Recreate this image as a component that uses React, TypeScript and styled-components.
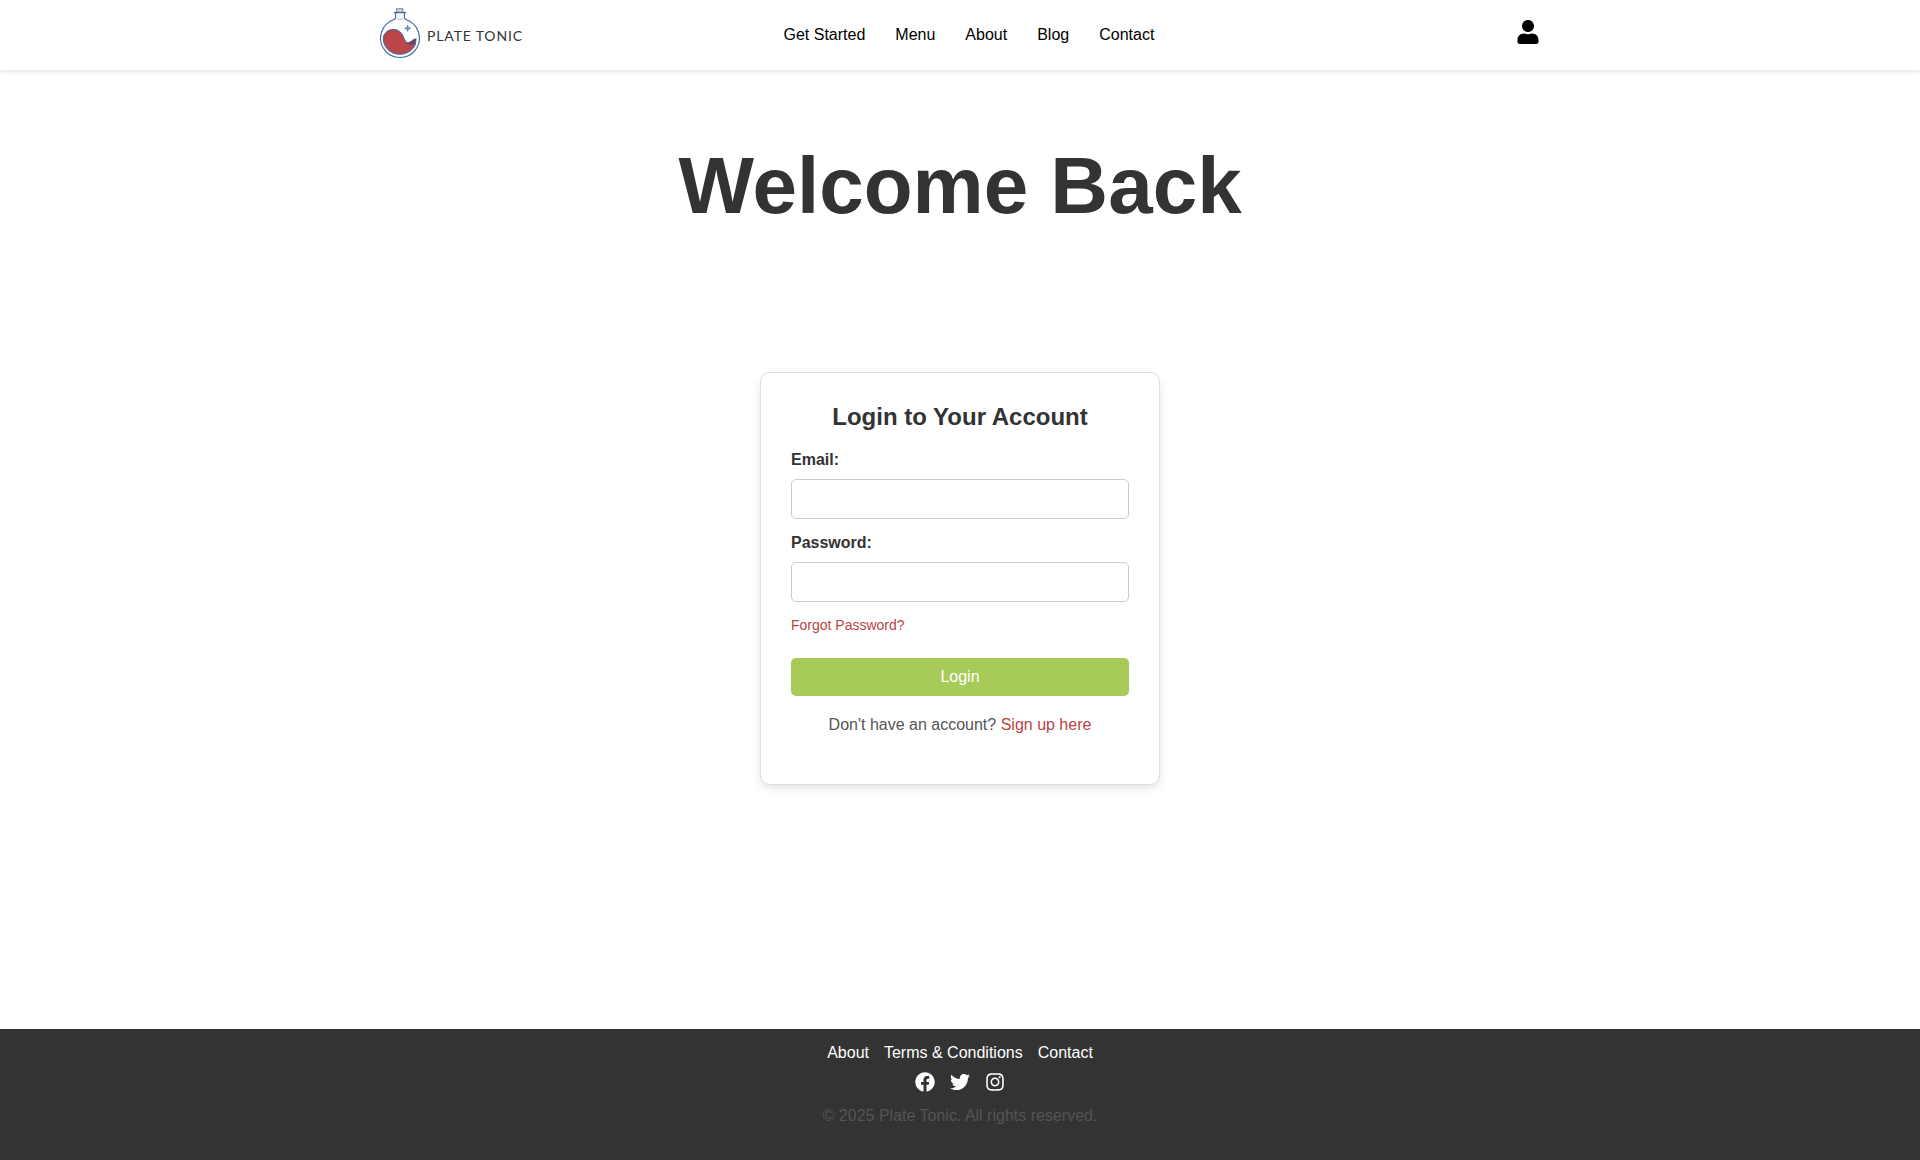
import React from 'react';
import styled, { createGlobalStyle } from 'styled-components';
import { FaUser, FaFacebook, FaTwitter, FaInstagram } from 'react-icons/fa';

const GlobalStyle = createGlobalStyle`
  *, *::before, *::after { box-sizing: border-box; }
  body {
    margin: 0;
    background: #fff;
    color: #333;
    font-family: "Liberation Sans", Arial, sans-serif;
    font-size: 16px;
    line-height: 24px;
  }
  a { text-decoration: none; }
`;

const Page = styled.div`
  display: flex;
  flex-direction: column;
  min-height: 1160px;
`;

const Header = styled.header`
  height: 70px;
  background: #fff;
  box-shadow: 0 2px 5px rgba(0, 0, 0, 0.1);
`;

const HeaderInner = styled.div`
  display: grid;
  grid-template-columns: 403.5px 1fr auto;
  align-items: start;
  width: 1200px;
  height: 100%;
  margin: 0 auto;
  padding: 0 20px;
`;

const Brand = styled.a`
  display: flex;
  color: #333;
`;

const Flask = styled.svg`
  flex: none;
  width: 42px;
  height: 60px;
`;

const BrandName = styled.span`
  margin: 24px 0 0 5px;
  font-family: Lato, sans-serif;
  font-size: 14px;
  line-height: 24px;
  letter-spacing: 0.85px;
  white-space: nowrap;
`;

const Nav = styled.nav`
  display: flex;
  gap: 30px;
  padding-top: 23px;
`;

const NavLink = styled.a`
  color: #000;
`;

const AccountLink = styled.a`
  display: flex;
  margin-top: 20px;
  color: #000;
  font-size: 24px;
`;

const Main = styled.main`
  display: flex;
  flex: 1;
  flex-direction: column;
  align-items: center;
`;

const Title = styled.h1`
  margin: 70px 0 0;
  font-size: 80px;
  font-weight: 700;
  line-height: 92px;
`;

const Card = styled.form`
  width: 400px;
  height: 413px;
  margin-top: 140px;
  padding: 30px;
  background: #fff;
  border: 1px solid #ddd;
  border-radius: 10px;
  box-shadow: 0 4px 8px rgba(0, 0, 0, 0.1);
`;

const CardTitle = styled.h2`
  margin: 0 0 17px;
  font-size: 24px;
  line-height: 28px;
  text-align: center;
`;

const Field = styled.div`
  display: flex;
  flex-direction: column;
  gap: 7px;
  margin-bottom: 12px;
`;

const Label = styled.label`
  font-weight: 700;
`;

const Input = styled.input`
  width: 100%;
  height: 40px;
  padding: 10px;
  background: #fff;
  border: 1px solid #ccc;
  border-radius: 5px;
  font: inherit;
`;

const ForgotLink = styled.a`
  display: block;
  color: #b94445;
  font-size: 14px;
  line-height: 22px;
`;

const SubmitButton = styled.button`
  display: block;
  width: 100%;
  height: 38px;
  margin-top: 22px;
  padding: 0;
  background: #a8ca59;
  border: 0;
  border-radius: 5px;
  color: #fff;
  font: inherit;
`;

const SignUp = styled.p`
  margin: 17px 0 0;
  color: #555;
  text-align: center;
`;

const SignUpLink = styled.a`
  color: #b94445;
`;

const Footer = styled.footer`
  display: flex;
  flex-direction: column;
  align-items: center;
  height: 131px;
  padding-top: 12px;
  background: #333;
`;

const FooterRow = styled.div`
  display: flex;
  gap: 15px;
`;

const FooterLink = styled.a`
  color: #fff;
`;

const Social = styled(FooterRow)`
  margin-top: 7px;
  font-size: 20px;
`;

const SocialLink = styled.a`
  display: flex;
  color: #fff;
`;

const Copyright = styled.p`
  margin: 12px 0 0;
  color: #555;
`;

const FlaskLogo = () => (
  <Flask viewBox="0 0 42 60" fill="none">
    <path
      d="M15.600 12.800v4.700c0 1.200-.8 1.900-2 2.300a19.400 19.400 0 1 0 12.800 0c-1.200-.4-2-1.100-2-2.300v-4.700"
      stroke="#3b62a3"
      strokeWidth="1.1"
    />
    <path d="M16.600 8.700h6.400v3.600h-6.400z" fill="#e4cdb4" stroke="#3b62a3" strokeWidth=".7" />
    <path d="M14.400 12.600h11.200" stroke="#3b62a3" strokeWidth="1.300" strokeLinecap="round" />
    <path d="M17 19.300h6.500" stroke="#9fb4d5" strokeWidth=".9" />
    <path
      d="M3.400 37.600c.6-4.800 5-8.300 9.900-8.200 5 .1 8 2.800 9.700 6.600 1.100 2.500 2.100 5.300 4 6.900l8.600.7C33.500 50 27 54.400 19.400 54.300 10.200 54.200 2.700 46.900 3.400 37.600Z"
      fill="#bb4547"
      stroke="#3b62a3"
      strokeWidth="1"
    />
    <path
      d="M26.300 42.800c2.200-.1 4.100-.8 5.600-2.100 1.300-1.200 2.600-1.900 4.300-2-.1 2.100-.4 3.600-1.100 5.100-3.200 1.400-6.100.8-8.800-1Z"
      fill="#823d52"
      stroke="#3b62a3"
      strokeWidth=".7"
    />
    <path
      d="M27.600 25.300c.3 2 1 2.700 3 3-2 .3-2.700 1-3 3-.3-2-1-2.700-3-3 2-.3 2.700-1 3-3Z"
      fill="#7f9bc7"
      stroke="#3b62a3"
      strokeWidth=".7"
    />
  </Flask>
);

const navItems = ['Get Started', 'Menu', 'About', 'Blog', 'Contact'];
const footerItems = ['About', 'Terms & Conditions', 'Contact'];
const socialItems = [
  { label: 'Facebook', Icon: FaFacebook },
  { label: 'Twitter', Icon: FaTwitter },
  { label: 'Instagram', Icon: FaInstagram },
];

export default function App() {
  return (
    <>
      <GlobalStyle />
      <Page>
        <Header>
          <HeaderInner>
            <Brand href="#">
              <FlaskLogo />
              <BrandName>PLATE TONIC</BrandName>
            </Brand>
            <Nav>
              {navItems.map((item) => (
                <NavLink href="#" key={item}>{item}</NavLink>
              ))}
            </Nav>
            <AccountLink href="#"><FaUser /></AccountLink>
          </HeaderInner>
        </Header>
        <Main>
          <Title>Welcome Back</Title>
          <Card>
            <CardTitle>Login to Your Account</CardTitle>
            <Field>
              <Label htmlFor="email">Email:</Label>
              <Input id="email" type="email" />
            </Field>
            <Field>
              <Label htmlFor="password">Password:</Label>
              <Input id="password" type="password" />
            </Field>
            <ForgotLink href="#">Forgot Password?</ForgotLink>
            <SubmitButton type="button">Login</SubmitButton>
            <SignUp>
              Don't have an account? <SignUpLink href="#">Sign up here</SignUpLink>
            </SignUp>
          </Card>
        </Main>
        <Footer>
          <FooterRow>
            {footerItems.map((item) => (
              <FooterLink href="#" key={item}>{item}</FooterLink>
            ))}
          </FooterRow>
          <Social>
            {socialItems.map(({ label, Icon }) => (
              <SocialLink href="#" key={label}><Icon /></SocialLink>
            ))}
          </Social>
          <Copyright>© 2025 Plate Tonic. All rights reserved.</Copyright>
        </Footer>
      </Page>
    </>
  );
}
